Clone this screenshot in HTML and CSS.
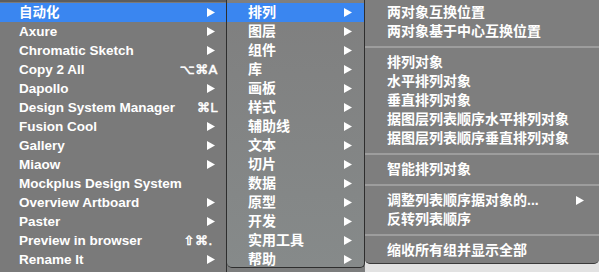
FILE: index.html
```html
<!DOCTYPE html>
<html lang="zh">
<head>
<meta charset="utf-8">
<title>Plugins menu</title>
<link rel="stylesheet" href="styles.css">
</head>
<body>
<div class="stage">
  <div class="menu menu-plugins">
    <div class="item active"><span class="label">自动化</span><svg class="arrow" viewBox="0 0 8 9"><polygon points="0,0 8,4.5 0,9"/></svg></div>
    <div class="item"><span class="label">Axure</span><svg class="arrow" viewBox="0 0 8 9"><polygon points="0,0 8,4.5 0,9"/></svg></div>
    <div class="item"><span class="label">Chromatic Sketch</span><svg class="arrow" viewBox="0 0 8 9"><polygon points="0,0 8,4.5 0,9"/></svg></div>
    <div class="item"><span class="label">Copy 2 All</span><span class="shortcut">⌥⌘A</span></div>
    <div class="item"><span class="label">Dapollo</span><svg class="arrow" viewBox="0 0 8 9"><polygon points="0,0 8,4.5 0,9"/></svg></div>
    <div class="item"><span class="label">Design System Manager</span><span class="shortcut">⌘L</span></div>
    <div class="item"><span class="label">Fusion Cool</span><svg class="arrow" viewBox="0 0 8 9"><polygon points="0,0 8,4.5 0,9"/></svg></div>
    <div class="item"><span class="label">Gallery</span><svg class="arrow" viewBox="0 0 8 9"><polygon points="0,0 8,4.5 0,9"/></svg></div>
    <div class="item"><span class="label">Miaow</span><svg class="arrow" viewBox="0 0 8 9"><polygon points="0,0 8,4.5 0,9"/></svg></div>
    <div class="item"><span class="label">Mockplus Design System</span></div>
    <div class="item"><span class="label">Overview Artboard</span><svg class="arrow" viewBox="0 0 8 9"><polygon points="0,0 8,4.5 0,9"/></svg></div>
    <div class="item"><span class="label">Paster</span><svg class="arrow" viewBox="0 0 8 9"><polygon points="0,0 8,4.5 0,9"/></svg></div>
    <div class="item"><span class="label">Preview in browser</span><span class="shortcut short-preview">⇧⌘.</span></div>
    <div class="item"><span class="label">Rename It</span><svg class="arrow" viewBox="0 0 8 9"><polygon points="0,0 8,4.5 0,9"/></svg></div>
  </div>

  <div class="col col-2">
    <div class="menu menu-auto">
      <div class="item active"><span class="label">排列</span><svg class="arrow" viewBox="0 0 8 9"><polygon points="0,0 8,4.5 0,9"/></svg></div>
      <div class="item"><span class="label">图层</span><svg class="arrow" viewBox="0 0 8 9"><polygon points="0,0 8,4.5 0,9"/></svg></div>
      <div class="item"><span class="label">组件</span><svg class="arrow" viewBox="0 0 8 9"><polygon points="0,0 8,4.5 0,9"/></svg></div>
      <div class="item"><span class="label">库</span><svg class="arrow" viewBox="0 0 8 9"><polygon points="0,0 8,4.5 0,9"/></svg></div>
      <div class="item"><span class="label">画板</span><svg class="arrow" viewBox="0 0 8 9"><polygon points="0,0 8,4.5 0,9"/></svg></div>
      <div class="item"><span class="label">样式</span><svg class="arrow" viewBox="0 0 8 9"><polygon points="0,0 8,4.5 0,9"/></svg></div>
      <div class="item"><span class="label">辅助线</span><svg class="arrow" viewBox="0 0 8 9"><polygon points="0,0 8,4.5 0,9"/></svg></div>
      <div class="item"><span class="label">文本</span><svg class="arrow" viewBox="0 0 8 9"><polygon points="0,0 8,4.5 0,9"/></svg></div>
      <div class="item"><span class="label">切片</span><svg class="arrow" viewBox="0 0 8 9"><polygon points="0,0 8,4.5 0,9"/></svg></div>
      <div class="item"><span class="label">数据</span><svg class="arrow" viewBox="0 0 8 9"><polygon points="0,0 8,4.5 0,9"/></svg></div>
      <div class="item"><span class="label">原型</span><svg class="arrow" viewBox="0 0 8 9"><polygon points="0,0 8,4.5 0,9"/></svg></div>
      <div class="item"><span class="label">开发</span><svg class="arrow" viewBox="0 0 8 9"><polygon points="0,0 8,4.5 0,9"/></svg></div>
      <div class="item"><span class="label">实用工具</span><svg class="arrow" viewBox="0 0 8 9"><polygon points="0,0 8,4.5 0,9"/></svg></div>
      <div class="item"><span class="label">帮助</span><svg class="arrow" viewBox="0 0 8 9"><polygon points="0,0 8,4.5 0,9"/></svg></div>
    </div>
  </div>

  <div class="col col-3">
    <div class="menu menu-arrange">
      <div class="item"><span class="label">两对象互换位置</span></div>
      <div class="item"><span class="label">两对象基于中心互换位置</span></div>
      <div class="sep"></div>
      <div class="item"><span class="label">排列对象</span></div>
      <div class="item"><span class="label">水平排列对象</span></div>
      <div class="item"><span class="label">垂直排列对象</span></div>
      <div class="item"><span class="label">据图层列表顺序水平排列对象</span></div>
      <div class="item"><span class="label">据图层列表顺序垂直排列对象</span></div>
      <div class="sep"></div>
      <div class="item"><span class="label">智能排列对象</span></div>
      <div class="sep"></div>
      <div class="item"><span class="label">调整列表顺序据对象的...</span><svg class="arrow" viewBox="0 0 8 9"><polygon points="0,0 8,4.5 0,9"/></svg></div>
      <div class="item"><span class="label">反转列表顺序</span></div>
      <div class="sep"></div>
      <div class="item"><span class="label">缩收所有组并显示全部</span></div>
    </div>
  </div>
</div>
</body>
</html>
```

FILE: styles.css
```css
* { box-sizing: border-box; }

html, body {
  margin: 0;
  padding: 0;
  width: 599px;
  height: 272px;
  overflow: hidden;
  background: #7a7a7a;
}

.stage {
  display: flex;
  width: 599px;
  height: 272px;
  font-family: "Liberation Sans", "Noto Sans CJK SC", sans-serif;
  font-weight: 700;
  color: #ffffff;
}

.menu {
  display: flex;
  flex-direction: column;
}

.item {
  display: flex;
  align-items: center;
  height: 19px;
  flex: none;
  white-space: nowrap;
}

.item .label {
  flex: 1;
  line-height: 19px;
}

.item.active {
  background: #3a86f0;
}

.arrow {
  width: 8px;
  height: 9px;
  fill: #ffffff;
  flex: none;
}

.shortcut {
  font-family: "DejaVu Sans", "Liberation Sans", sans-serif;
  font-weight: 400;
  font-size: 13px;
  letter-spacing: 0.5px;
  -webkit-text-stroke: 0.5px #ffffff;
}

/* Plugins menu */
.menu-plugins {
  width: 227px;
  height: 272px;
  padding-top: 3px;
  background: linear-gradient(#5d5d5d 0, #5d5d5d 2px, #7a7a7a 2px);
  border-right: 1px solid #2e2e2e;
  font-size: 13.5px;
}

.menu-plugins .item {
  padding-left: 19px;
  padding-right: 8px;
}

.menu-plugins .arrow {
  margin-right: 3px;
}

.menu-plugins .short-preview {
  margin-right: 5px;
}

/* Automation submenu */
.col-2 {
  width: 138px;
  height: 272px;
  background: #7c7d7d;
}

.menu-auto {
  width: 138px;
  height: 268px;
  padding-top: 3px;
  background: linear-gradient(#7f7f7f, #868a8a);
  border-right: 1px solid #2e2e2e;
  border-bottom: 1px solid #2e2e2e;
  border-radius: 0 0 5px 5px;
  font-size: 14px;
}

.menu-auto .item {
  padding-left: 21px;
  padding-right: 12px;
}

/* Arrange submenu */
.col-3 {
  flex: 1;
  height: 272px;
  background: #e2e2e2;
}

.menu-arrange {
  height: 264px;
  padding-top: 3px;
  background: #7e7e7e;
  border-bottom: 1px solid #3a3a3a;
  border-radius: 0 0 5px 5px;
  font-size: 14px;
}

.menu-arrange .item {
  padding-left: 22px;
  padding-right: 15px;
}

.sep {
  height: 12px;
  flex: none;
  display: flex;
  align-items: center;
}

.sep::before {
  content: "";
  display: block;
  width: 100%;
  height: 2px;
  background: #9d9d9d;
}
```
